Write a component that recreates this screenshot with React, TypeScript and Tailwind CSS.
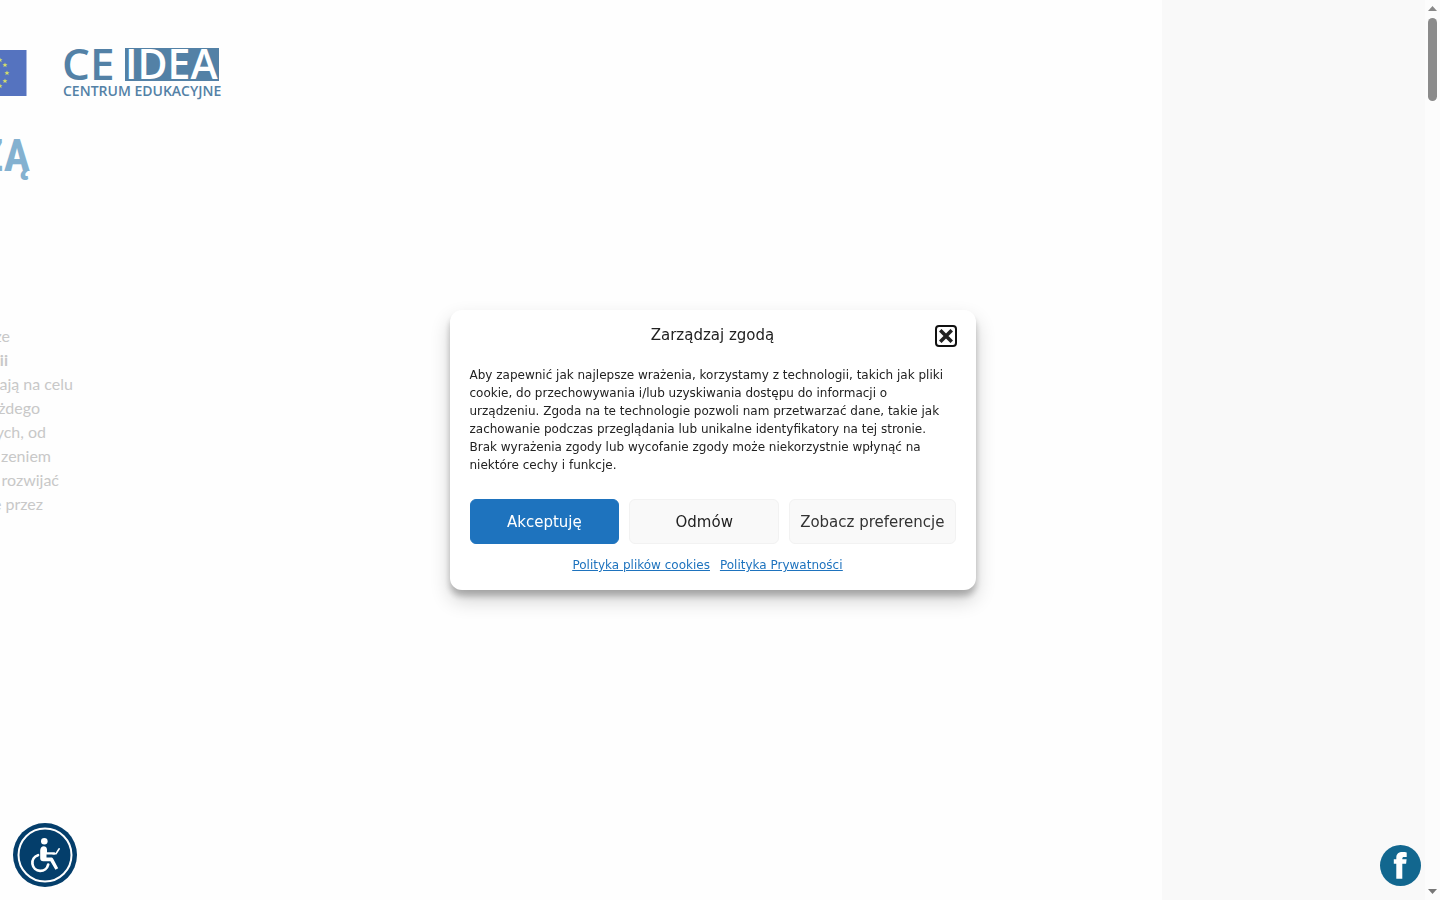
const LINES = [
  { text: 'że', width: 'w-[10px]' },
  { text: 'ii', width: 'w-[8px]', bold: true },
  { text: 'mają na celu', width: 'w-[73px]' },
  { text: 'każdego', width: 'w-[40px]' },
  { text: 'nych, od', width: 'w-[46px]' },
  { text: 'zeniem', width: 'w-[51px]' },
  { text: 'rozwijać', width: 'w-[59px]' },
  { text: 'że przez', width: 'w-[43px]' },
]

const STARS = [[0, 11], [5, 16], [7, 24], [5, 32], [0, 37]]

function EuFlag() {
  return (
    <svg width="27" height="46" viewBox="0 0 27 46" role="img" aria-label="Unia Europejska" className="shrink-0">
      <rect width="26.500" height="46" fill="#5573bf" />
      {STARS.map(([x, y]) => (
        <path key={`${x}-${y}`} transform={`translate(${x} ${y - 1})`} fill="#d6e06a" d="M0-2.6.7-.8 2.5-.8 1.1.4 1.6 2.2 0 1.1-1.6 2.2-1.1.4-2.5-.8-.7-.8Z" />
      ))}
    </svg>
  )
}

function IdeaLogo() {
  return (
    <svg width="164" height="54" viewBox="0 0 164 54" role="img" aria-label="CE IDEA Centrum Edukacyjne" className="shrink-0 font-['Open_Sans',sans-serif] font-semibold">
      <rect x="62" y="2" width="94" height="33" fill="#5381a6" />
      <text x="-1" y="34" fontSize="44" fill="#5381a6">CE</text>
      <text x="62" y="33" fontSize="41" fill="#fff">IDEA</text>
      <text x="0" y="50" fontSize="14" fill="#5381a6">CENTRUM EDUKACYJNE</text>
    </svg>
  )
}

function AccessibilityIcon() {
  return (
    <svg width="64" height="64" viewBox="0 0 64 64" fill="none" aria-hidden="true">
      <circle cx="32" cy="32" r="32" fill="#043e6b" />
      <circle cx="32" cy="32" r="26.5" stroke="#fff" strokeWidth="2" />
      <circle cx="31.300" cy="18.200" r="3.300" fill="#fff" />
      <path d="M27.200 27.500c0-5.500 6.600-5.500 6.800-1v2.700h7.200c1.500 0 1.500 2.300 0 2.300h-7.700v3h4.200c1.300 0 2 .4 2.600 1.500l4.900 9.200-2.800 1.600-5-8.600h-7.200c-2 0-3-1-3-3Z" fill="#fff" />
      <path d="M25 32.200a8 8 0 1 0 10.200 9.300" stroke="#fff" strokeWidth="2.700" strokeLinecap="round" />
      <path d="M40 30.800h3l3.200-5" stroke="#fff" strokeWidth="1.600" strokeLinecap="round" />
    </svg>
  )
}

function FacebookIcon() {
  return (
    <svg width="41" height="41" viewBox="0 0 41 41" aria-hidden="true">
      <circle cx="20.500" cy="20.500" r="20.500" fill="#12678f" />
      <path d="M16.300 33.800V18.800h-2.500v-4.500h2.500v-1.500c0-4 2.500-5.700 6.200-5.700 1.600 0 3.200.1 4.200.3v4.500h-2.500c-1.400 0-1.900.6-1.900 1.800v.6h4.300l-.5 4.500h-3.800v15Z" fill="#fff" />
    </svg>
  )
}

function ConsentDialog() {
  const button = 'h-[45px] rounded-md border pt-[2px] text-[15px] cursor-pointer'
  return (
    <div role="dialog" aria-labelledby="consent-title" className="w-[526px] max-w-full rounded-xl bg-white pt-[15px] pb-4 font-['DejaVu_Sans',sans-serif] text-[#222] shadow-[0_10px_20px_rgba(0,0,0,0.19),0_6px_6px_rgba(0,0,0,0.23)]">
      <div className="grid grid-cols-[22px_1fr_22px] items-start px-[19px]">
        <h2 id="consent-title" className="col-start-2 text-center text-[15px] leading-5">Zarządzaj zgodą</h2>
        <button aria-label="Zamknij" className="flex size-[22px] cursor-pointer items-center justify-center rounded-sm border-2 border-[#111]">
          <svg width="14" height="14" viewBox="0 0 14 14" aria-hidden="true">
            <path d="M2.500 2.500l9 9M11.500 2.500l-9 9" stroke="#222" strokeWidth="3.600" strokeLinecap="square" />
          </svg>
        </button>
      </div>
      <div className="px-5 pt-[19px]">
        <p className="text-xs leading-[18px]">
          Aby zapewnić jak najlepsze wrażenia, korzystamy z technologii, takich jak pliki cookie, do przechowywania i/lub uzyskiwania dostępu do informacji o urządzeniu. Zgoda na te technologie pozwoli nam przetwarzać dane, takie jak zachowanie podczas przeglądania lub unikalne identyfikatory na tej stronie. Brak wyrażenia zgody lub wycofanie zgody może niekorzystnie wpłynąć na niektóre cechy i funkcje.
        </p>
        <div className="mt-[25px] grid grid-cols-[1fr_1fr_auto] gap-[10px]">
          <button className={`${button} border-[#1e73be] bg-[#1e73be] text-white`}>Akceptuję</button>
          <button className={`${button} border-[#f2f2f2] bg-[#f9f9f9] text-[#222]`}>Odmów</button>
          <button className={`${button} border-[#f2f2f2] bg-[#f9f9f9] px-[10px] text-[#333]`}>Zobacz preferencje</button>
        </div>
        <div className="mt-3 flex justify-center gap-[10px] pr-[10px] text-xs leading-[18px] text-[#1e73be] underline">
          <a href="#cookies">Polityka plików cookies</a>
          <a href="#prywatnosc">Polityka Prywatności</a>
        </div>
      </div>
    </div>
  )
}

export default function App() {
  return (
    <div className="flex min-h-screen overflow-hidden bg-[#fefefe]">
      <main className="flex-1 overflow-hidden pt-[46px]">
        <header className="flex items-center gap-9">
          <EuFlag />
          <IdeaLogo />
        </header>
        <h1 className="mt-7 flex w-[30px] justify-end font-['Liberation_Sans_Narrow','Roboto_Condensed','Open_Sans_Condensed',sans-serif] text-[44px] leading-[56px] font-bold text-[#84b1d0]">ZĄ</h1>
        <div className="mt-[140px] font-[Lato,sans-serif] text-base leading-6 text-[#c8c8c8]">
          {LINES.map(l => (
            <p key={l.text} className={`flex justify-end whitespace-nowrap ${l.width} ${l.bold ? 'font-bold' : ''}`}>{l.text}</p>
          ))}
        </div>
      </main>
      <aside className="w-[263px] shrink-0 bg-[#f9f9f9]" />
      <div className="flex w-[15px] shrink-0 flex-col items-center bg-[#fcfcfc] py-[6px]" aria-hidden="true">
        <svg width="9" height="5" viewBox="0 0 9 5"><path d="M4.500 0 9 5H0Z" fill="#888" /></svg>
        <div className="mt-[7px] h-[83px] w-[9px] rounded-full bg-[#8b8b8b]" />
        <svg width="9" height="5" viewBox="0 0 9 5" className="mt-auto"><path d="M0 0h9L4.500 5Z" fill="#777" /></svg>
      </div>

      <div className="fixed inset-y-0 right-[15px] left-0 flex items-center justify-center">
        <ConsentDialog />
      </div>
      <button aria-label="Dostępność" className="fixed bottom-[13px] left-[13px] cursor-pointer"><AccessibilityIcon /></button>
      <a href="#facebook" aria-label="Facebook" className="fixed right-[19px] bottom-[14px]"><FacebookIcon /></a>
    </div>
  )
}
